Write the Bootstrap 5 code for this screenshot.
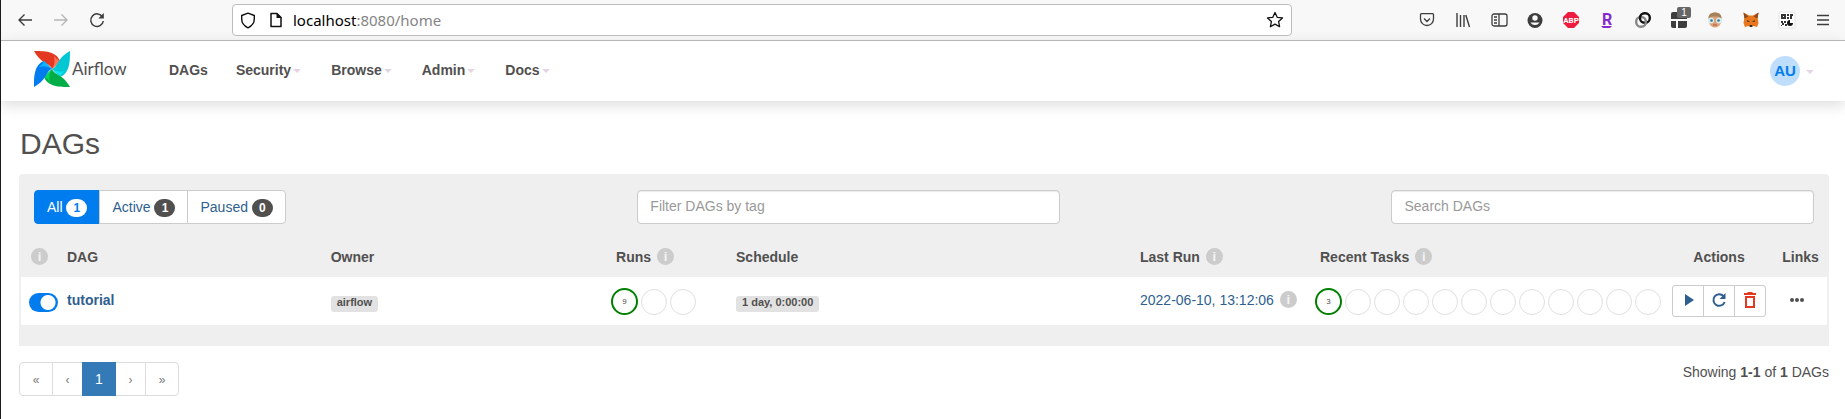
<!DOCTYPE html>
<html lang="en">
<head>
<meta charset="utf-8">
<meta name="viewport" content="width=device-width, initial-scale=1">
<title>DAGs - Airflow</title>
<link href="https://cdn.jsdelivr.net/npm/bootstrap@5.3.0/dist/css/bootstrap.min.css" rel="stylesheet">
<style>
  body { font-family: "Liberation Sans", Arial, sans-serif; font-size: 14px; line-height: 20px; color: #51504f; background: #fff; border-left: 1px solid #1c1a1c; min-height: 100vh; }
  a { color: #2f5f8f; text-decoration: none; }
  svg { display: block; flex: none; overflow: visible; }
  .browser { height: 41px; background: #f8f8f8; border-bottom: 1px solid #bdbdbd; padding: 0 4px 0 6px; }
  .tool { width: 36px; height: 36px; padding: 0; border: 0; background: none; display: flex; align-items: center; justify-content: center; position: relative; color: #3d3d3d; }
  .nav-tools { width: 225px; }
  .url { flex: 0 1 1060px; height: 32px; border: 1px solid #bcbcbc; border-radius: 4px; background: #fff; padding: 0 3px 0 7px; color: #111; }
  .url-text { font: 15px/20px "Noto Sans", sans-serif; color: #858585; flex: 1; margin-left: 11px; }
  .url-text b { font-weight: 400; color: #000; }
  .page-icon { margin-left: 14px; }
  .count { position: absolute; top: 5px; right: 6px; background: #666; color: #fff; font-size: 10px; line-height: 11px; width: 14px; height: 11px; border-radius: 2px; }
  .topbar { height: 60px; padding: 0 31px 0 33px; background: #fff; box-shadow: 0 4px 14px rgba(0,0,0,.14); }
  .brand { font: 17px/24px Lato, sans-serif; color: #51504f; gap: 2px; width: 120px; }
  .menu a { color: #51504f; font-weight: 700; padding: 0 15px 2px; display: flex; align-items: center; }
  .menu a:first-child { padding-right: 13px; }
  .tri { width: 8px; border: 4px solid transparent; border-top-color: #e3d5e6; border-bottom: 0; margin-left: 2px; margin-top: 2px; }
  .avatar { width: 30px; height: 30px; border-radius: 50%; background: #bfdefb; color: #017cee; font-weight: 700; font-size: 15px; display: flex; align-items: center; justify-content: center; margin-right: 4px; }
  main { padding: 25px 16px 0 18px; }
  h1 { font-size: 30px; line-height: 36px; margin: 0 0 12px; padding-left: 1px; }
  .panel { background: #efefef; border-radius: 4px 4px 0 0; padding: 16px 2px 21px; }
  .filters { --bs-gutter-x: 30px; margin: 0 -2px; }
  .filters .btn { --bs-btn-padding-x: 12px; --bs-btn-padding-y: 6px; --bs-btn-font-size: 14px; --bs-btn-line-height: 20px; --bs-btn-border-radius: 4px; border-color: #ccc; background: #fff; color: #2f5f8f; --bs-btn-border-color: #ccc; height: 34px; }
  .filters .btn.on { background: #017cee; border-color: #017cee; color: #fff; }
  .pill { display: inline-block; min-width: 21px; height: 18px; border-radius: 10px; background: #51504f; color: #fff; font-weight: 700; font-size: 12px; line-height: 18px; text-align: center; }
  .on .pill { background: #fff; color: #017cee; }
  .filters .form-control { height: 34px; font-size: 14px; line-height: 20px; padding: 6px 12px 8px; border-color: #ccc; border-radius: 4px; box-shadow: inset 0 1px 1px rgba(0,0,0,.08); }
  .form-control::placeholder { color: #999; }
  .dags { table-layout: fixed; width: 100%; }
  .dags th, .dags td { padding: 0 8px; white-space: nowrap; vertical-align: middle; }
  .dags th { height: 53px; padding-top: 13px; }
  .dags td { height: 48px; background: #fff; }
  .dags td.up { padding-bottom: 2px; }
  .inf { width: 17px; height: 17px; border-radius: 50%; background: #ccc; color: #f4f4f4; font-size: 13px; font-weight: 700; line-height: 17px; text-align: center; display: inline-block; vertical-align: middle; margin-left: 6px; margin-bottom: 2px; }
  .dags .first { padding-right: 0; }
  .first .inf { margin-left: 2px; }
  .sw { appearance: none; display: block; width: 29px; height: 19px; border-radius: 10px; background: radial-gradient(circle at 19px 50%, #fff 7px, #017cee 8px); margin: 2px 0 0; }
  .tag { display: inline-block; background: #e2e2e2; border-radius: 3px; padding: 0 6px; font-size: 11px; line-height: 13px; height: 16px; font-weight: 700; margin-top: 4px; vertical-align: middle; color: #51504f; }
  .rings { gap: 3px; margin-left: -5px; padding-top: 1px; }
  .ring { flex: none; width: 26px; height: 26px; border: 1px solid #e0e0e0; border-radius: 50%; font-size: 8px; line-height: 24px; text-align: center; }
  .ring.ok { width: 27px; height: 27px; border: 2px solid green; }
  .acts .btn { width: 32px; height: 32px; padding: 0 0 2px; border-color: #ccc; border-radius: 3px; display: flex; align-items: center; justify-content: center; background: #fff; }
  .pagination { --bs-pagination-padding-x: 8px; --bs-pagination-padding-y: 6px; --bs-pagination-font-size: 14px; --bs-pagination-color: #777; --bs-pagination-border-color: #ddd; --bs-pagination-border-radius: 4px; --bs-pagination-active-bg: #337ab7; --bs-pagination-active-border-color: #337ab7; margin: 0; }
  .page-link { min-width: 34px; height: 34px; text-align: center; }
  .page-link.step { min-width: 31px; }
  .page-link span { font-size: 12px; }
</style>
</head>
<body>
<header class="browser d-flex align-items-center">
  <div class="nav-tools d-flex align-items-center">
    <button class="tool" aria-label="Back"><svg width="16" height="16" fill="none" stroke="currentColor" stroke-width="1.4"><path d="M15 8H2M7.500 2.500 2 8l5.500 5.500"/></svg></button>
    <button class="tool" aria-label="Forward"><svg width="16" height="16" fill="none" stroke="#b5b5b5" stroke-width="1.400"><path d="M1 8h13M8.500 2.500 14 8l-5.500 5.500"/></svg></button>
    <button class="tool" aria-label="Reload"><svg width="16" height="16" fill="none" stroke="currentColor" stroke-width="1.500"><path d="M13.500 5A6.300 6.300 0 1 0 14.300 9"/><path d="M14.800 1v5.500H9.300z" fill="currentColor" stroke="none"/></svg></button>
  </div>
  <div class="url d-flex align-items-center">
    <svg width="16" height="17" fill="none" stroke="currentColor" stroke-width="1.400"><path d="M8 1.200 14.300 3.500V7c0 4-2.500 7-6.300 8.800C4.200 14 1.700 11 1.700 7V3.500z" stroke-linejoin="round"/></svg>
    <svg class="page-icon" width="12" height="16" fill="none" stroke="currentColor" stroke-width="1.500"><path d="M1 1.500h6L11 5.500v9H1z" stroke-linejoin="round"/><path d="M6.500 1v5H12z" fill="currentColor" stroke="none"/></svg>
    <span class="url-text"><b>localhost</b>:8080/home</span>
    <svg width="18" height="18" viewBox="0 0 18 18" fill="none" stroke="currentColor" stroke-width="1.300" stroke-linejoin="round" class="me-1"><path d="m9 1.500 2.200 4.800 5.300.6-3.900 3.600 1 5.200L9 13.100l-4.600 2.600 1-5.200L1.500 6.900l5.300-.6z"/></svg>
  </div>
  <div class="d-flex ms-auto">
    <button class="tool" aria-label="Pocket"><svg width="16" height="16" fill="none" stroke="currentColor" stroke-width="1.300"><path d="M2.500 1.700h11a1 1 0 0 1 1 1V7a6.500 6.500 0 0 1-13 0V2.700a1 1 0 0 1 1-1zM5 6.500l3 3 3-3"/></svg></button>
    <button class="tool" aria-label="Library"><svg width="16" height="16" fill="none" stroke="currentColor" stroke-width="1.400"><path d="M2 1v14M5.500 3v12M9 3v12M10.800 3l3.700 12"/></svg></button>
    <button class="tool" aria-label="Sidebar"><svg width="17" height="16" fill="none" stroke="currentColor" stroke-width="1.300"><rect x="1" y="2" width="15" height="12" rx="2"/><path d="M8 2v12M3 5h3M3 8h3M3 11h3"/></svg></button>
    <button class="tool" aria-label="Account"><svg width="16" height="16"><circle cx="8" cy="8.500" r="7.500" fill="#3d3d3d"/><circle cx="8" cy="6" r="2.700" fill="#f8f8f8"/><path d="M3.500 10.500h9A5 5 0 0 1 8 13a5 5 0 0 1-4.500-2.500" fill="#f8f8f8"/></svg></button>
    <button class="tool" aria-label="Adblock"><svg width="16" height="16"><path d="M5 0h6l5 5v6l-5 5H5l-5-5V5z" fill="#ee1c40"/><text x="8" y="11" font-size="8" font-weight="700" font-family="Roboto" fill="#fff" text-anchor="middle">ABP</text></svg></button>
    <button class="tool" aria-label="Rakuten"><svg width="16" height="18"><text x="8" y="14" font-size="16" font-weight="700" font-family="Roboto" fill="#8529cd" text-anchor="middle">R</text><path d="M2 15h11l-2 2H4z" fill="#8529cd"/></svg></button>
    <button class="tool" aria-label="Link"><svg width="16" height="16" fill="none" stroke-width="2.400"><rect x="1.200" y="5" width="9.600" height="9.800" rx="4.500" stroke="#888"/><rect x="5" y="1.200" width="9.800" height="9.600" rx="4.500" stroke="#111"/><path d="M10.800 8.500V10a4 4 0 0 1-1 3" stroke="#888"/></svg></button>
    <button class="tool" aria-label="Containers, 1"><svg width="16" height="18"><path d="M0 3a2 2 0 0 1 2-2h12a2 2 0 0 1 2 2v5H0zM0 10h5v7H2a2 2 0 0 1-2-2zM7 10h9v5a2 2 0 0 1-2 2H7z" fill="#3d3d3d"/></svg><span class="count">1</span></button>
    <button class="tool" aria-label="Face"><svg width="16" height="16"><ellipse cx="8" cy="8" rx="6.500" ry="7.500" fill="#dda077"/><path d="M1.500 7C1 2.500 4 .5 8 .5s7 2 6.500 6.500L11 4.500H5z" fill="#a58258"/><circle cx="4" cy="8.500" r="3" fill="#d7edf3"/><circle cx="12" cy="8.500" r="3" fill="#d7edf3"/><circle cx="4.500" cy="8.500" r="1.300" fill="#347888"/><circle cx="11.500" cy="8.500" r="1.300" fill="#347888"/><path d="M6 13h4" stroke="#b45745"/></svg></button>
    <button class="tool" aria-label="Fox"><svg width="16" height="16"><path d="m.5.500 5.500 3h4l5.500-3-.8 6 .8 4.500-1.500 4-3.500-1L9 15H7l-1.500-1L2 15 .5 11l.8-4.500z" fill="#e8771d"/><path d="m.5.500 5 4-4 2zM15.500.500l-5 4 4 2z" fill="#8a4b20"/><path d="m4 8 3 1.500L4.500 10zM12 8 9 9.500l2.500.5z" fill="#333"/><path d="M6.500 13h3l-.5 2H7z" fill="#333"/></svg></button>
    <button class="tool" aria-label="QR code"><svg width="16" height="16"><rect width="16" height="16" rx="1" fill="#fff" stroke="#e4e4e4"/><path d="M2 2h5v5H2zM8 2h2v2H8zM11 2h3v2h-1v3h-2zM8 5h2v2H8zM2 9h2v2H2zM5 9h2v2H5zM3 11h2v2H3zM6 12h2v2H6zM2 13h1v1H2z" fill="#333"/><path d="M4 4h1v1H4z" fill="#fff"/><path d="M11 8v3h3a3 3 0 1 1-3-3" fill="#111"/></svg></button>
    <button class="tool" aria-label="Menu"><svg width="16" height="16" stroke="currentColor" stroke-width="1.500"><path d="M2 3.500h12M2 8h12M2 12.500h12"/></svg></button>
  </div>
</header>

<nav class="topbar d-flex align-items-center">
  <a href="#" class="brand d-flex align-items-center pb-1"><svg width="36" height="36" viewBox="-18 -18 36 36">
    <g><path d="M-18-18C-8-18 4-18 8-8L0 0C-3-7-10-4-18-18" fill="#e43921"/><path d="M0 0 8-8Q5-9 2-13 4-6 0 0" fill="#ff7557"/></g>
    <g transform="rotate(90)"><path d="M-18-18C-8-18 4-18 8-8L0 0C-3-7-10-4-18-18" fill="#00c7d4"/><path d="M0 0 8-8Q5-9 2-13 4-6 0 0" fill="#11e1ee"/></g>
    <g transform="rotate(180)"><path d="M-18-18C-8-18 4-18 8-8L0 0C-3-7-10-4-18-18" fill="#00ad46"/><path d="M0 0 8-8Q5-9 2-13 4-6 0 0" fill="#04d659"/></g>
    <g transform="rotate(270)"><path d="M-18-18C-8-18 4-18 8-8L0 0C-3-7-10-4-18-18" fill="#017cee"/><path d="M0 0 8-8Q5-9 2-13 4-6 0 0" fill="#0cb6ff"/></g>
  </svg>Airflow</a>
  <div class="menu d-flex">
    <a href="#">DAGs</a>
    <a href="#">Security<span class="tri"></span></a>
    <a href="#">Browse<span class="tri"></span></a>
    <a href="#">Admin<span class="tri"></span></a>
    <a href="#">Docs<span class="tri"></span></a>
  </div>
  <a href="#" class="d-flex align-items-center ms-auto"><span class="avatar">AU</span><span class="tri"></span></a>
</nav>

<main>
  <h1>DAGs</h1>
  <section class="panel">
    <div class="row filters">
      <div class="col-4 d-flex align-items-start">
        <div class="btn-group">
          <button class="btn on">All <span class="pill">1</span></button>
          <button class="btn">Active <span class="pill">1</span></button>
          <button class="btn">Paused <span class="pill">0</span></button>
        </div>
      </div>
      <div class="col-3"><input class="form-control" aria-label="Filter DAGs by tag" placeholder="Filter DAGs by tag"></div>
      <div class="col-3 offset-2"><input type="search" class="form-control" aria-label="Search DAGs" placeholder="Search DAGs"></div>
    </div>
    <table class="dags">
      <colgroup><col style="width:38px"><col style="width:14.6%"><col style="width:15.8%"><col style="width:120px"><col><col style="width:180px"><col style="width:352px"><col style="width:110px"><col style="width:53px"></colgroup>
      <thead><tr>
        <th class="first"><span class="inf">i</span></th><th>DAG</th><th>Owner</th><th>Runs<span class="inf">i</span></th><th>Schedule</th><th>Last Run<span class="inf">i</span></th><th>Recent Tasks<span class="inf">i</span></th><th class="text-center">Actions</th><th class="text-center">Links</th>
      </tr></thead>
      <tbody><tr>
        <td class="first"><input type="checkbox" class="sw" checked aria-label="Pause or unpause tutorial"></td>
        <td class="up"><a href="#"><b>tutorial</b></a></td>
        <td><span class="tag">airflow</span></td>
        <td><div class="rings d-flex align-items-center"><span class="ring ok">9</span><span class="ring"></span><span class="ring"></span></div></td>
        <td><span class="tag">1 day, 0:00:00</span></td>
        <td class="up"><a href="#">2022-06-10, 13:12:06</a><span class="inf">i</span></td>
        <td><div class="rings d-flex align-items-center"><span class="ring ok">3</span><span class="ring"></span><span class="ring"></span><span class="ring"></span><span class="ring"></span><span class="ring"></span><span class="ring"></span><span class="ring"></span><span class="ring"></span><span class="ring"></span><span class="ring"></span><span class="ring"></span></div></td>
        <td><div class="btn-group acts">
          <button class="btn" aria-label="Trigger"><svg width="16" height="16"><path d="M5 2v12l9-6z" fill="#2f5f8f"/></svg></button>
          <button class="btn" aria-label="Refresh"><svg width="16" height="16"><path d="M12.500 4A5.800 5.800 0 1 0 13.700 10" fill="none" stroke="#2f5f8f" stroke-width="2"/><path d="M14.500 1v6h-6z" fill="#2f5f8f"/></svg></button>
          <button class="btn" aria-label="Delete"><svg width="16" height="16"><path d="M3 4h10v12H3zM5 6v8h6V6zM2 1h3l1-1h4l1 1h3v2H2z" fill="#e43921" fill-rule="evenodd"/></svg></button>
        </div></td>
        <td><a href="#" aria-label="Links"><svg class="ms-2" width="16" height="16" fill="#51504f"><circle cx="2" cy="7" r="2"/><circle cx="7" cy="7" r="2"/><circle cx="12" cy="7" r="2"/></svg></a></td>
      </tr></tbody>
    </table>
  </section>
  <div class="d-flex justify-content-between pt-3">
    <ul class="pagination">
      <li class="page-item"><a class="page-link" href="#"><span>«</span></a></li>
      <li class="page-item"><a class="page-link step" href="#"><span>‹</span></a></li>
      <li class="page-item active"><a class="page-link" href="#">1</a></li>
      <li class="page-item"><a class="page-link step" href="#"><span>›</span></a></li>
      <li class="page-item"><a class="page-link" href="#"><span>»</span></a></li>
    </ul>
    <div>Showing <b>1-1</b> of <b>1</b> DAGs</div>
  </div>
</main>
<script src="https://cdn.jsdelivr.net/npm/bootstrap@5.3.0/dist/js/bootstrap.bundle.min.js"></script>
</body>
</html>
